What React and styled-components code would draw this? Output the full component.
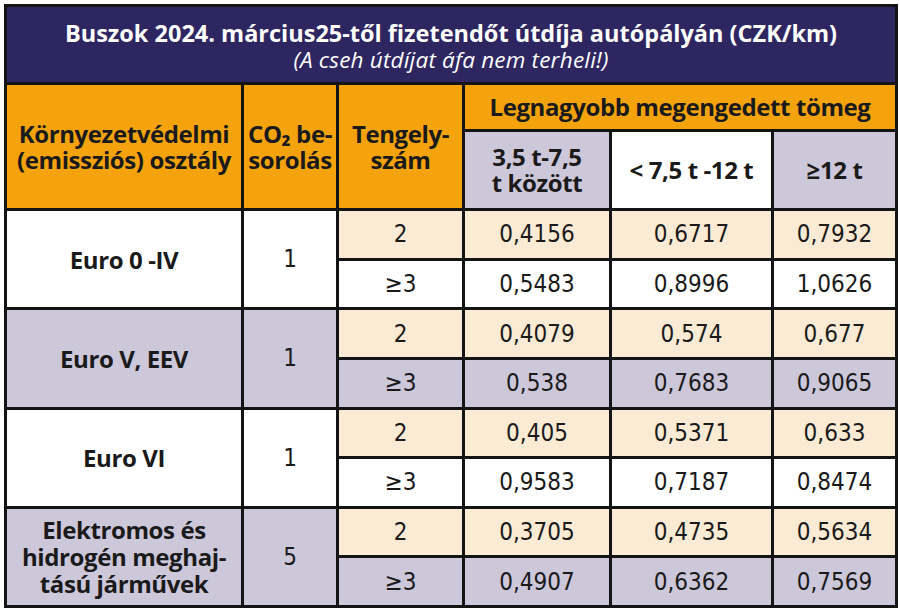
import React from 'react';
import styled, { createGlobalStyle } from 'styled-components';

const color = {
  line: '#141414',
  purple: '#2e2661',
  orange: '#f4a30d',
  lilac: '#cdc7da',
  peach: '#fcebd4',
  white: '#ffffff',
  ink: '#1a1a1a',
};

const GlobalStyle = createGlobalStyle`
  html, body {
    margin: 0;
    padding: 0;
    background: #fff;
  }
  body {
    padding: 4px 2px 0 4px;
    font-family: "Open Sans", "Noto Sans", sans-serif;
  }
`;

const groups = [
  { name: 'Euro 0 -IV', co2: '1', bg: color.white, rows: [['0,4156', '0,6717', '0,7932'], ['0,5483', '0,8996', '1,0626']] },
  { name: 'Euro V, EEV', co2: '1', bg: color.lilac, rows: [['0,4079', '0,574', '0,677'], ['0,538', '0,7683', '0,9065']] },
  { name: 'Euro VI', co2: '1', bg: color.white, rows: [['0,405', '0,5371', '0,633'], ['0,9583', '0,7187', '0,8474']] },
  { name: ['Elektromos és', 'hidrogén meghaj-', 'tású járművek'], co2: '5', bg: color.lilac, rows: [['0,3705', '0,4735', '0,5634'], ['0,4907', '0,6362', '0,7569']] },
];

const axles = ['2', '≥3'];

function Lines({ text }) {
  const list = Array.isArray(text) ? text : [text];
  return list.map((t, i) => (
    <React.Fragment key={i}>
      {i > 0 && <br />}
      {t}
    </React.Fragment>
  ));
}

export default function App() {
  return (
    <>
      <GlobalStyle />
      <Styled.Table>
        <Styled.Title>
          <Styled.TitleMain>Buszok 2024. március25-től fizetendőt útdíja autópályán (CZK/km)</Styled.TitleMain>
          <Styled.TitleSub>(A cseh útdíjat áfa nem terheli!)</Styled.TitleSub>
        </Styled.Title>

        <Styled.Head $rows={2}>
          <Lines text={['Környezetvédelmi', '(emissziós) osztály']} />
        </Styled.Head>
        <Styled.Head $rows={2}>
          <Lines text={['CO₂ be-', 'sorolás']} />
        </Styled.Head>
        <Styled.Head $rows={2}>
          <Lines text={['Tengely-', 'szám']} />
        </Styled.Head>
        <Styled.Head $cols={3}>Legnagyobb megengedett tömeg</Styled.Head>
        <Styled.Head $bg={color.lilac}>
          <Lines text={['3,5 t-7,5', 't között']} />
        </Styled.Head>
        <Styled.Head $bg={color.white}>&lt; 7,5 t -12 t</Styled.Head>
        <Styled.Head $bg={color.lilac}>≥12 t</Styled.Head>

        {groups.map((g, gi) => (
          <React.Fragment key={gi}>
            <Styled.Label $rows={2} $bg={g.bg}>
              <Lines text={g.name} />
            </Styled.Label>
            <Styled.Value $rows={2} $bg={g.bg}>{g.co2}</Styled.Value>
            {g.rows.map((r, ri) => {
              const bg = ri === 0 ? color.peach : g.bg;
              return (
                <React.Fragment key={ri}>
                  <Styled.Value $bg={bg}>{axles[ri]}</Styled.Value>
                  {r.map((v, vi) => (
                    <Styled.Value key={vi} $bg={bg}>{v}</Styled.Value>
                  ))}
                </React.Fragment>
              );
            })}
          </React.Fragment>
        ))}
      </Styled.Table>
    </>
  );
}

const Styled = {
  Table: styled.div`
    box-sizing: border-box;
    width: 894px;
    height: 604px;
    display: grid;
    grid-template-columns: 234px 92px 123px 144px 159px 1fr;
    grid-template-rows: 75px 44px 76px repeat(8, 1fr);
    gap: 3px;
    padding: 3px;
    background: ${color.line};
    color: ${color.ink};
  `,
  Title: styled.div`
    grid-column: 1 / -1;
    background: ${color.purple};
    color: #fff;
    display: flex;
    flex-direction: column;
    align-items: center;
    justify-content: center;
    padding-top: 2px;
  `,
  TitleMain: styled.div`
    font-family: "Open Sans", sans-serif;
    font-weight: 700;
    font-size: 23.5px;
    line-height: 28px;
  `,
  TitleSub: styled.div`
    font-family: "Open Sans", sans-serif;
    font-style: italic;
    font-weight: 400;
    font-size: 22.5px;
    line-height: 26px;
    letter-spacing: 0.2px;
  `,
  Head: styled.div`
    grid-row: span ${p => p.$rows || 1};
    grid-column: span ${p => p.$cols || 1};
    background: ${p => p.$bg || color.orange};
    display: flex;
    align-items: center;
    justify-content: center;
    text-align: center;
    font-family: "Open Sans", sans-serif;
    font-weight: 700;
    font-size: 24px;
    line-height: 26px;
    letter-spacing: -0.4px;
    white-space: nowrap;
  `,
  Label: styled.div`
    grid-row: span ${p => p.$rows || 1};
    background: ${p => p.$bg};
    display: flex;
    align-items: center;
    justify-content: center;
    text-align: center;
    font-family: "Open Sans", sans-serif;
    font-weight: 700;
    font-size: 24px;
    line-height: 27px;
    letter-spacing: -0.4px;
    white-space: nowrap;
  `,
  Value: styled.div`
    grid-row: span ${p => p.$rows || 1};
    background: ${p => p.$bg};
    display: flex;
    align-items: center;
    justify-content: center;
    font-family: "Liberation Sans Narrow", "DejaVu Sans Condensed", "Liberation Sans", sans-serif;
    font-size: 24px;
  `,
};
